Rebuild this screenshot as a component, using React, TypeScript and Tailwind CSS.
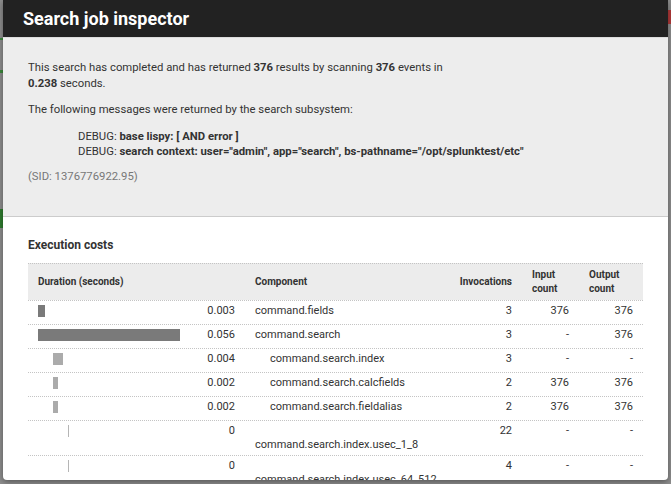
import React from 'react';

type Row = {
  level: number;
  bar: number;
  duration: string;
  component: string;
  invocations: string;
  input: string;
  output: string;
  wrap?: boolean;
};

const rows: Row[] = [
  { level: 0, bar: 7, duration: '0.003', component: 'command.fields', invocations: '3', input: '376', output: '376' },
  { level: 0, bar: 142, duration: '0.056', component: 'command.search', invocations: '3', input: '-', output: '376' },
  { level: 1, bar: 10, duration: '0.004', component: 'command.search.index', invocations: '3', input: '-', output: '-' },
  { level: 1, bar: 5, duration: '0.002', component: 'command.search.calcfields', invocations: '2', input: '376', output: '376' },
  { level: 1, bar: 5, duration: '0.002', component: 'command.search.fieldalias', invocations: '2', input: '376', output: '376' },
  { level: 2, bar: 1, duration: '0', component: 'command.search.index.usec_1_8', invocations: '22', input: '-', output: '-', wrap: true },
  { level: 2, bar: 1, duration: '0', component: 'command.search.index.usec_64_512', invocations: '4', input: '-', output: '-', wrap: true },
];

const barColor = ['bg-[#7a7a7a]', 'bg-[#ababab]', 'bg-[#b5b5b5]'];
const barIndent = ['ml-0', 'ml-[15px]', 'ml-[30px]'];
const compIndent = ['pl-[10px]', 'pl-[25px]', 'pl-[10px]'];

const cols = 'grid grid-cols-[217px_204px_73px_57px_64px]';

function CostRow({ r }: { r: Row }) {
  return (
    <div className={`${cols} border-t border-dotted border-[#c4c4c4] ${r.wrap ? 'h-[35px]' : 'h-[24px]'} leading-[14px]`}>
      <div className="flex justify-between pl-[10px] pr-[10px] pt-[3px]">
        <div className={`mt-[1px] h-[12px] ${barIndent[r.level]} ${barColor[r.level]}`} style={{ width: r.bar }} />
        <span>{r.duration}</span>
      </div>
      <div className={`${compIndent[r.level]} ${r.wrap ? 'pt-[17px]' : 'pt-[3px]'} whitespace-nowrap`}>{r.component}</div>
      <div className="pr-[10px] pt-[3px] text-right">{r.invocations}</div>
      <div className="pr-[10px] pt-[3px] text-right">{r.input}</div>
      <div className="pr-[10px] pt-[3px] text-right">{r.output}</div>
    </div>
  );
}

export default function App() {
  return (
    <div className="relative h-[484px] w-[671px] overflow-hidden bg-[#8e8e8e] font-[Roboto,sans-serif]">
      {/* bits of the page behind the dialog */}
      <div className="absolute left-0 top-[38px] h-[2px] w-[3px] bg-[#3c8a3c]" />
      <div className="absolute left-0 top-[70px] h-[3px] w-[3px] bg-[#3c8a3c]" />
      <div className="absolute left-0 top-[209px] h-[19px] w-[3px] bg-[#2f7d2f]" />
      <div className="absolute right-0 top-[10px] h-[14px] w-[3px] bg-[#b33a3a]" />

      <div className="absolute left-[3px] top-0 flex h-[480px] w-[665px] flex-col overflow-hidden rounded-b-[4px] bg-white shadow-[0_2px_6px_rgba(0,0,0,0.4)]">
        <div className="flex h-[37px] shrink-0 items-center bg-[#222222] px-[20px]">
          <h1 className="whitespace-nowrap text-[18px] font-bold text-white">Search job inspector</h1>
        </div>

        <div className="shrink-0 border-t border-b border-t-[#dcdcdc] border-b-[#cccccc] bg-[#ededed] pl-[25px] pt-[22px] pb-[31px] text-[11.3px] leading-[16px] text-[#333]">
          <p>
            This search has completed and has returned <b>376</b> results by scanning <b>376</b> events in
            <br />
            <b>0.238</b> seconds.
          </p>
          <p className="mt-[10px]">The following messages were returned by the search subsystem:</p>
          <div className="mt-[11px] pl-[50px] leading-[15px]">
            <div>
              DEBUG: <b>base lispy: [ AND error ]</b>
            </div>
            <div>
              DEBUG: <b>search context: user="admin", app="search", bs-pathname="/opt/splunktest/etc"</b>
            </div>
          </div>
          <p className="mt-[10px] text-[#777]">(SID: 1376776922.95)</p>
        </div>

        <div className="pl-[25px] pt-[20px] text-[11px] text-[#333]">
          <h2 className="text-[12px] font-bold leading-[16px] text-[#333]">Execution costs</h2>
          <div className="mt-[10px] w-[615px]">
            <div className={`${cols} h-[37px] items-center border-t border-dotted border-[#c4c4c4] bg-[#ececec] text-[10px] font-bold leading-[14px]`}>
              <div className="pl-[10px]">Duration (seconds)</div>
              <div className="pl-[10px]">Component</div>
              <div className="pr-[10px] text-right">Invocations</div>
              <div className="pl-[10px]">
                Input
                <br />
                count
              </div>
              <div className="pl-[10px]">
                Output
                <br />
                count
              </div>
            </div>
            {rows.map((r, i) => (
              <CostRow key={i} r={r} />
            ))}
          </div>
        </div>
      </div>
    </div>
  );
}
